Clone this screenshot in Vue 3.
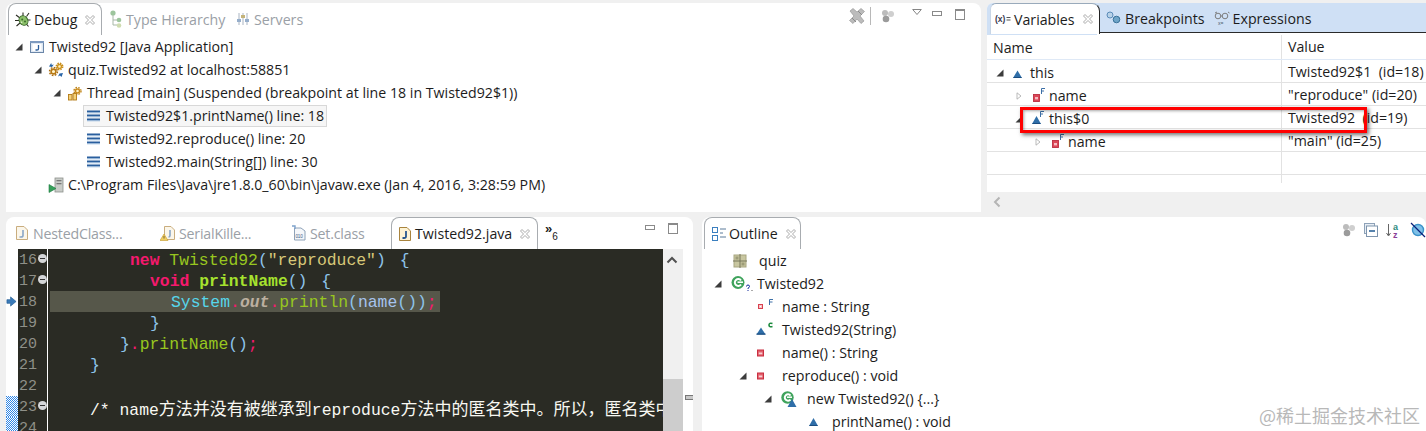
<script setup>
const debugRows = [
  { level: 0, arrow: 'open', icon: 'japp', text: 'Twisted92 [Java Application]' },
  { level: 1, arrow: 'open', icon: 'gears', text: 'quiz.Twisted92 at localhost:58851' },
  { level: 2, arrow: 'open', icon: 'thread', text: 'Thread [main] (Suspended (breakpoint at line 18 in Twisted92$1))' },
  { level: 3, arrow: '', icon: 'frame', text: 'Twisted92$1.printName() line: 18', selected: true },
  { level: 3, arrow: '', icon: 'frame', text: 'Twisted92.reproduce() line: 20' },
  { level: 3, arrow: '', icon: 'frame', text: 'Twisted92.main(String[]) line: 30' },
  { level: 1, arrow: '', icon: 'proc', text: 'C:\\Program Files\\Java\\jre1.8.0_60\\bin\\javaw.exe (Jan 4, 2016, 3:28:59 PM)' },
]
const varRows = [
  { level: 0, arrow: 'open', icon: 'tri', name: 'this', value: 'Twisted92$1  (id=18)' },
  { level: 1, arrow: 'closed', icon: 'redf', name: 'name', value: '"reproduce" (id=20)' },
  { level: 1, arrow: 'open', icon: 'trif', name: 'this$0', value: 'Twisted92  (id=19)' },
  { level: 2, arrow: 'closed', icon: 'redf', name: 'name', value: '"main" (id=25)' },
  { level: 0, arrow: '', icon: '', name: '', value: '' },
]
const outlineRows = [
  { level: 0, arrow: '', icon: 'pkg', text: 'quiz' },
  { level: 0, arrow: 'open', icon: 'cls', text: 'Twisted92' },
  { level: 1, arrow: '', icon: 'field', text: 'name : String' },
  { level: 1, arrow: '', icon: 'ctor', text: 'Twisted92(String)' },
  { level: 1, arrow: '', icon: 'priv', text: 'name() : String' },
  { level: 1, arrow: 'open', icon: 'priv', text: 'reproduce() : void' },
  { level: 2, arrow: 'open', icon: 'anon', text: 'new Twisted92() {...}' },
  { level: 3, arrow: '', icon: 'otri', text: 'printName() : void' },
]
const editorTabs = [
  { icon: 'jfile', text: 'NestedClass...', w: 146 },
  { icon: 'jwarn', text: 'SerialKille...', w: 131 },
  { icon: 'cfile', text: 'Set.class', w: 108 },
]
const gutter = [
  { n: 16, fold: true }, { n: 17, fold: true }, { n: 18, current: true }, { n: 19 }, { n: 20 },
  { n: 21 }, { n: 22 }, { n: 23, fold: true, changed: true }, { n: 24, changed: true },
]
</script>

<template>
  <div class="root">
    <svg class="defs" width="0" height="0" aria-hidden="true">
      <defs>
        <pattern id="dither" width="2" height="2" patternUnits="userSpaceOnUse"><rect width="2" height="2" fill="#fff"/><rect width="1" height="1" fill="#2f86e6"/><rect x="1" y="1" width="1" height="1" fill="#2f86e6"/></pattern>
        <symbol id="open" viewBox="0 0 8 8"><path d="M7.5 .5 V7.5 H.5 Z" fill="#3c3c3c"/></symbol>
        <symbol id="closed" viewBox="0 0 8 10"><path d="M1.5 1 L6.5 5 L1.5 9 Z" fill="#fff" stroke="#aaa"/></symbol>
        <symbol id="close" viewBox="0 0 10 10"><path d="M.5 2 L2 .5 L5 3.5 L8 .5 L9.5 2 L6.5 5 L9.5 8 L8 9.5 L5 6.5 L2 9.5 L.5 8 L3.5 5 Z" fill="#fff" stroke="#a0a0a0" stroke-width=".9"/></symbol>
        <symbol id="japp" viewBox="0 0 16 16"><rect x="1.5" y="2.5" width="13" height="11" fill="#dfe8f3" stroke="#6b86a8"/><rect x="1" y="2" width="14" height="2" fill="#7d9ac0"/><rect x="3.5" y="5" width="9" height="7" fill="#fff"/><path d="M9.5 6 V10 Q9.5 11 8 11 H6.5" fill="none" stroke="#2a5d9c" stroke-width="1.3"/></symbol>
        <symbol id="gears" viewBox="0 0 16 16"><circle cx="5.5" cy="9.5" r="2.4" fill="#fff3c8" stroke="#b97a15" stroke-width="1.6"/><circle cx="5.5" cy="9.5" r="4" fill="none" stroke="#a96c10" stroke-width="1.4" stroke-dasharray="1.7 1.4"/><circle cx="11.5" cy="4.5" r="2" fill="#fff3c8" stroke="#cf9420" stroke-width="1.4"/><circle cx="11.5" cy="4.5" r="3.3" fill="none" stroke="#c58a18" stroke-width="1.3" stroke-dasharray="1.5 1.1"/><path d="M1 4.5 L3.2 1 L3.8 3 L5.8 2.6 L4 5 Z" fill="#2a66a8"/><path d="M15 11 L13.5 15 L12 13.4 L10 14.5 L11.5 11.5 Z" fill="#2a66a8"/></symbol>
        <symbol id="thread" viewBox="0 0 16 16"><circle cx="10.5" cy="6" r="2" fill="#fff3c8" stroke="#c98a1c" stroke-width="1.4"/><circle cx="10.5" cy="6" r="3.5" fill="none" stroke="#c08416" stroke-width="1.4" stroke-dasharray="1.6 1.2"/><rect x="1.5" y="9.5" width="3.5" height="5.5" fill="#f4d27a" stroke="#b37a16" stroke-width=".9"/><rect x="6" y="8.5" width="3.5" height="6.5" fill="#f4d27a" stroke="#b37a16" stroke-width=".9"/></symbol>
        <symbol id="frame" viewBox="0 0 16 16"><g fill="#2a5f9e"><rect x="1" y="2.5" width="13" height="2"/><rect x="1" y="6.5" width="13" height="2"/><rect x="1" y="10.5" width="13" height="2"/></g><g fill="#9fc0e0"><rect x="1" y="4.5" width="13" height=".8"/><rect x="1" y="8.5" width="13" height=".8"/><rect x="1" y="12.5" width="13" height=".8"/></g></symbol>
        <symbol id="proc" viewBox="0 0 16 16"><rect x="7" y="1" width="8" height="14" fill="#c9ccc8" stroke="#8d918c" stroke-width=".8"/><rect x="8.5" y="3" width="5" height="1.3" fill="#777"/><rect x="8.5" y="6" width="5" height="1.3" fill="#777"/><path d="M1 7.5 L8 11.5 L1 15.5 Z" fill="#36a05a" stroke="#1e7a3f" stroke-width=".6"/></symbol>
        <symbol id="tri" viewBox="0 0 16 16"><path d="M4.5 5.5 L9 13 H0 Z" fill="#2f6ea8"/><rect x=".5" y="12" width="8" height="1" fill="#1b4d80"/></symbol>
        <symbol id="otri" viewBox="0 0 22 16"><path d="M7.5 4 L12 12 H3 Z" fill="#2f6ea8"/><rect x="3.5" y="11" width="8" height="1" fill="#1b4d80"/></symbol>
        <symbol id="redf" viewBox="0 0 16 16"><rect x="1.5" y="6.5" width="6" height="7" fill="#dc4757" stroke="#bb3042" stroke-width=".9"/><rect x="3" y="9" width="3" height="2.4" fill="#f6bcc2"/><path d="M9.5 6 V.5 H13 M9.5 3 H12" fill="none" stroke="#3c6fa6"/></symbol>
        <symbol id="trif" viewBox="0 0 16 16"><path d="M4.5 5 L9 13 H0 Z" fill="#2f6ea8"/><rect x=".5" y="12" width="8" height="1" fill="#1b4d80"/><path d="M8.5 6 V.5 H12 M8.5 3 H11" fill="none" stroke="#3c6fa6"/></symbol>
        <symbol id="pkg" viewBox="0 0 14 14"><rect x="1" y="1" width="12" height="12" fill="#c8c6a0" stroke="#a8a680"/><path d="M7 0 V14 M0 7 H14" stroke="#77775a"/><rect x="2.5" y="2.5" width="3" height="3" fill="#9d9c78"/><rect x="8.5" y="8.5" width="3" height="3" fill="#9d9c78"/></symbol>
        <symbol id="cls" viewBox="0 0 22 16"><circle cx="7" cy="6.5" r="6.5" fill="#3fa35c"/><path d="M10 4.5 A3.4 3.4 0 1 0 10 8.5" fill="none" stroke="#fff" stroke-width="2"/><path d="M6.5 6.2 H12" stroke="#fff" stroke-width="1.6"/><path d="M15.5 10.5 Q15.5 9 17 9 Q18.5 9 18.5 10.5 Q18.5 11.5 17 12.2 V13 M17 14 V15" fill="none" stroke="#102a9a" stroke-width="1"/><rect x="20.5" y="14" width="1" height="1" fill="#555"/></symbol>
        <symbol id="field" viewBox="0 0 22 16"><rect x="2.5" y="5.5" width="4" height="4" fill="#f3c4c8" stroke="#d9404f"/><rect x="4" y="7" width="1" height="1" fill="#fff"/><path d="M13.5 6 V.5 H17 M13.5 3 H16.5" fill="none" stroke="#3c6fa6"/></symbol>
        <symbol id="ctor" viewBox="0 0 22 16"><path d="M5 5.5 L9.5 12.5 H.5 Z" fill="#2f6ea8"/><rect x=".5" y="11.5" width="9" height="1.2" fill="#1b4d80"/><path d="M16.5 1.5 Q13 .5 13 3 Q13 5.5 16.5 4.5" fill="none" stroke="#1b8a3c" stroke-width="1.6"/></symbol>
        <symbol id="priv" viewBox="0 0 22 16"><rect x="1.5" y="5" width="6" height="6" fill="#e2606c" stroke="#c92f40"/><rect x="2.8" y="7.5" width="3.5" height="1.8" fill="#f8d0d4"/></symbol>
        <symbol id="anon" viewBox="0 0 22 16"><circle cx="6.5" cy="6.5" r="6.2" fill="#3fa35c"/><path d="M9.5 4.5 A3.2 3.2 0 1 0 9.5 8.5" fill="none" stroke="#fff" stroke-width="2"/><path d="M6 6.2 H11" stroke="#fff" stroke-width="1.5"/><path d="M11 8 L15.5 16 H6.5 Z" fill="#2f6ea8"/></symbol>
        <symbol id="jfile" viewBox="0 0 14 16"><path d="M1.5 1.5 H9 L12.5 5 V14.5 H1.5 Z" fill="#fbf6ea" stroke="#c9ad7e"/><path d="M8 5 V10.5 Q8 12 6 12 H4.5" fill="none" stroke="#8aa6c6" stroke-width="1.6"/></symbol>
        <symbol id="jactive" viewBox="0 0 14 16"><path d="M1.5 1.5 H9 L12.5 5 V14.5 H1.5 Z" fill="#fdf3d4" stroke="#a9843e"/><path d="M8 5 V10.5 Q8 12 6 12 H4.5" fill="none" stroke="#27578f" stroke-width="1.8"/></symbol>
        <symbol id="jwarn" viewBox="0 0 16 16"><path d="M4.5 1.5 H11 L14.5 5 V14.5 H4.5 Z" fill="#fbf6ea" stroke="#c9ad7e"/><path d="M10 5 V10.5 Q10 12 8.5 12" fill="none" stroke="#8aa6c6" stroke-width="1.6"/><path d="M4 9 L8 15.5 H0 Z" fill="#f0cf62" stroke="#c49b2e" stroke-width=".6"/><path d="M4 11 V13.5" stroke="#75603a"/></symbol>
        <symbol id="cfile" viewBox="0 0 16 16"><path d="M3.5 3 H10 L14 6 V15 H3.5 Z" fill="#f5f7fa" stroke="#8ea2b8"/><path d="M1 1 L4 1 L4 4" fill="none" stroke="#7ea2cc" stroke-width="1.4"/><text x="4.5" y="13" font-size="4.6" font-family="Liberation Sans, sans-serif" fill="#3d5d85">010</text></symbol>
        <symbol id="bug" viewBox="0 0 16 16"><path d="M1 3 L5 6 M0 8.5 H4 M1.5 14 L5 11 M8 .5 L8 4 M14 1 L11.5 4.5 M15.5 8 H12 M13.5 14.5 L11 11.5" stroke="#2c2c24" stroke-width="1.1"/><ellipse cx="8.5" cy="8.5" rx="4.2" ry="5" fill="#8cc06a" stroke="#3c6b2c" transform="rotate(-35 8.5 8.5)"/><circle cx="7.2" cy="7.4" r="1" fill="#3c6b2c"/><circle cx="10" cy="9.6" r="1" fill="#3c6b2c"/><circle cx="6.5" cy="10.4" r=".8" fill="#dff0c8"/></symbol>
        <symbol id="hier" viewBox="0 0 14 18"><circle cx="4" cy="3" r="2.6" fill="#9dc59d"/><path d="M4 5 V15 H8 M4 10 H8" fill="none" stroke="#a7b8a7"/><circle cx="10" cy="10" r="2.3" fill="#9dc59d"/><circle cx="10" cy="15.5" r="2.3" fill="#cfdcb0"/></symbol>
        <symbol id="servers" viewBox="0 0 14 14"><path d="M3 1 V13 M7 1 V13 M11 1 V13" stroke="#a9b4c2"/><rect x="1" y="7" width="4" height="3" fill="#96aecb"/><rect x="5" y="3" width="4" height="3" fill="#c5b47a"/><rect x="9" y="7" width="4" height="3" fill="#96aecb"/></symbol>
        <symbol id="vars" viewBox="0 0 16 12"><text x="0" y="9" font-size="8.5" font-weight="700" font-family="Liberation Sans, sans-serif" fill="#3a3a50">(x)</text><path d="M11.5 4.5 H15.5 M11.5 7 H15.5" stroke="#555"/></symbol>
        <symbol id="bp" viewBox="0 0 15 14"><circle cx="4" cy="4" r="3" fill="#b8d2e8" stroke="#5a8bb8"/><circle cx="10.5" cy="8.5" r="3.3" fill="#6fa5c8" stroke="#3a7299"/></symbol>
        <symbol id="expr" viewBox="0 0 16 14"><circle cx="4" cy="5" r="2.8" fill="none" stroke="#7d7d7d"/><circle cx="11" cy="5" r="2.8" fill="none" stroke="#7d7d7d"/><path d="M6.8 5 H8.2 M1 2 L3 1 M14 1 L15.5 2" stroke="#7d7d7d"/><text x="4" y="13.5" font-size="5" font-family="Liberation Sans, sans-serif" fill="#4a5a6a">x=</text></symbol>
        <symbol id="rmv" viewBox="0 0 16 16"><path d="M1 3 L4 .5 L8 4 L12 .5 L15.5 3.5 L11 8 L15 13 L12 15.5 L8 11 L4 15.5 L.5 12.5 L5 8 Z" fill="#bcbcbc" stroke="#9a9a9a" stroke-width=".7"/><path d="M3 10 L7 14 M9 3 L13 7" stroke="#8a8a8a"/></symbol>
        <symbol id="coins" viewBox="0 0 14 14"><circle cx="4" cy="4" r="3" fill="#bcbcbc"/><circle cx="10" cy="5" r="3" fill="#cfcfcf"/><circle cx="5" cy="10" r="3.3" fill="#9b9b9b"/></symbol>
        <symbol id="collapse" viewBox="0 0 14 14"><rect x=".5" y=".5" width="10" height="10" fill="#e8eef5" stroke="#8ea2b8"/><rect x="2.5" y="3" width="11" height="10.5" fill="#fff" stroke="#7f95ad"/><path d="M5 8 H11" stroke="#1f5a92" stroke-width="1.5"/></symbol>
        <symbol id="sortaz" viewBox="0 0 16 16"><path d="M2.5 2 V13 M.5 11 L2.5 14 L4.5 11" fill="none" stroke="#666"/><text x="7" y="8" font-size="9" font-weight="700" font-family="Liberation Sans, sans-serif" fill="#2d8a80">a</text><text x="7" y="16" font-size="9" font-weight="700" font-family="Liberation Sans, sans-serif" fill="#8b3f98">z</text></symbol>
        <symbol id="hide" viewBox="0 0 16 16"><circle cx="8" cy="8" r="5.5" fill="#7ec0e8" stroke="#3b92c9" stroke-width="1.4"/><path d="M1 1 L15 15" stroke="#0a1f78" stroke-width="1.3"/></symbol>
        <symbol id="arrow" viewBox="0 0 12 12"><path d="M1 4 H5 V1 L11 6 L5 11 V8 H1 Z" fill="#3a7ab8" stroke="#1f5a92" stroke-width=".7"/></symbol>
      </defs>
    </svg>

    <div class="top">
      <section class="pane debug">
        <header class="tabs">
          <div class="tab active debugtab">
            <svg class="ic16"><use href="#bug"/></svg>
            <span>Debug</span>
            <svg class="x"><use href="#close"/></svg>
          </div>
          <div class="tab ghost hiertab"><svg class="hier"><use href="#hier"/></svg><span>Type Hierarchy</span></div>
          <div class="tab ghost srvtab"><svg class="srv"><use href="#servers"/></svg><span>Servers</span></div>
          <div class="tools">
            <svg class="ic16"><use href="#rmv"/></svg>
            <i class="sep"></i>
            <svg class="coin"><use href="#coins"/></svg>
            <svg class="menu" viewBox="0 0 10 6"><path d="M.7 .5 H9.3 L5 5.5 Z" fill="#fff" stroke="#777" stroke-width=".9"/></svg>
            <i class="min"></i>
            <i class="max"></i>
          </div>
        </header>
        <div class="tree">
          <div v-for="r in debugRows" :key="r.text" class="row" :style="{ paddingLeft: 9 + r.level * 19 + 'px' }">
            <span class="arrow"><svg v-if="r.arrow" class="tri"><use :href="'#' + r.arrow"/></svg></span>
            <span class="cell" :class="{ sel: r.selected }">
              <svg class="ic16"><use :href="'#' + r.icon"/></svg>
              <span class="label">{{ r.text }}</span>
            </span>
          </div>
        </div>
      </section>

      <section class="pane vars">
        <header class="bluetabs">
          <div class="btab active">
            <svg class="varsic"><use href="#vars"/></svg>
            <span>Variables</span>
            <svg class="x"><use href="#close"/></svg>
          </div>
          <div class="btab bptab"><svg class="bpic"><use href="#bp"/></svg><span>Breakpoints</span></div>
          <div class="btab extab"><svg class="exic"><use href="#expr"/></svg><span>Expressions</span></div>
        </header>
        <div class="table">
          <div class="vrow head"><div class="cname">Name</div><div class="cval">Value</div></div>
          <div v-for="(r, i) in varRows" :key="i" class="vrow">
            <div class="cname" :style="{ paddingLeft: 9 + r.level * 19 + 'px' }">
              <span class="varrow"><svg v-if="r.arrow" class="tri"><use :href="'#' + r.arrow"/></svg></span>
              <svg v-if="r.icon" class="vic"><use :href="'#' + r.icon"/></svg>
              <span>{{ r.name }}</span>
            </div>
            <div class="cval">{{ r.value }}</div>
          </div>
          <div class="vrow stub"><div class="cname"></div><div class="cval"></div></div>
        </div>
        <div class="hscroll"><svg class="chev" viewBox="0 0 8 12"><path d="M6.5 1.5 L2 6 L6.5 10.5" fill="none" stroke="#b5b5b5" stroke-width="2"/></svg></div>
        <div class="redbox"></div>
      </section>
    </div>

    <div class="bottom">
      <section class="pane editor">
        <header class="tabs etabs">
          <div v-for="t in editorTabs" :key="t.text" class="etab" :style="{ width: t.w + 'px' }">
            <svg class="ic16"><use :href="'#' + t.icon"/></svg>
            <span>{{ t.text }}</span>
          </div>
          <div class="tab active jtab">
            <svg class="jic"><use href="#jactive"/></svg>
            <span>Twisted92.java</span>
            <svg class="x"><use href="#close"/></svg>
          </div>
          <div class="more"><b>»</b><sub>6</sub></div>
          <div class="tools etools"><i class="min"></i><i class="max"></i></div>
        </header>
        <div class="editbody">
          <div class="stripe">
            <div v-for="g in gutter" :key="g.n" class="sline">
              <svg v-if="g.current" class="cur"><use href="#arrow"/></svg>
              <svg v-if="g.changed" class="dith"><rect width="12" height="21" fill="url(#dither)"/></svg>
            </div>
          </div>
          <div class="code">
            <div class="nums">
              <div v-for="g in gutter" :key="g.n" class="num"><span>{{ g.n }}</span><i v-if="g.fold" class="fold"></i></div>
            </div>
            <div class="lines">
              <div class="ln i8"><span class="kw">new</span> <span class="cl">Twisted92</span><span class="br">(</span><span class="st">"reproduce"</span><span class="br">)</span> <span class="br gap">{</span></div>
              <div class="ln i10"><span class="kw">void</span> <span class="fn">printName</span><span class="br">()</span> <span class="br gap">{</span></div>
              <div class="ln hl"><span class="pad12"></span><span class="sys">System</span><span class="pk">.</span><span class="out">out</span><span class="pk">.</span><span class="cl">println</span><span class="br">(</span><span class="nm">name</span><span class="br">())</span><span class="pk">;</span></div>
              <div class="ln i10"><span class="br">}</span></div>
              <div class="ln i7"><span class="br">}</span><span class="pk">.</span><span class="cl">printName</span><span class="br">()</span><span class="pk">;</span></div>
              <div class="ln i4"><span class="br">}</span></div>
              <div class="ln"></div>
              <div class="ln i4 cm">/* name<span class="cjk">方法并没有被继承到</span>reproduce<span class="cjk">方法中的匿名类中。所以，匿名类中</span></div>
              <div class="ln"></div>
            </div>
          </div>
          <div class="vscroll">
            <svg class="up" viewBox="0 0 12 8"><path d="M1.5 6.5 L6 2 L10.5 6.5" fill="none" stroke="#505050" stroke-width="2"/></svg>
            <div class="thumb"></div>
          </div>
          <div class="overview"><i class="mark"></i></div>
        </div>
      </section>

      <section class="pane outline">
        <header class="tabs">
          <div class="tab active otab">
            <svg class="oic" viewBox="0 0 14 14"><rect x=".5" y=".5" width="5" height="5" fill="#fff" stroke="#3b7fbf"/><rect x=".5" y="8.5" width="5" height="5" fill="#fff" stroke="#3b7fbf"/><path d="M8 2 H14 M8 6 H11 M8 10 H14" stroke="#5a7a9a"/></svg>
            <span>Outline</span>
            <svg class="x"><use href="#close"/></svg>
          </div>
          <div class="tools otools">
            <svg class="coin"><use href="#coins"/></svg>
            <svg class="coin"><use href="#collapse"/></svg>
            <svg class="ic16"><use href="#sortaz"/></svg>
            <svg class="ic16"><use href="#hide"/></svg>
          </div>
        </header>
        <div class="tree">
          <div v-for="r in outlineRows" :key="r.text" class="row" :style="{ paddingLeft: 12 + r.level * 25 + 'px' }">
            <span class="oarrow"><svg v-if="r.arrow" class="tri"><use :href="'#' + r.arrow"/></svg></span>
            <svg class="oicon" :class="r.icon"><use :href="'#' + r.icon"/></svg>
            <span class="olabel">{{ r.text }}</span>
          </div>
        </div>
        <div class="wm">@稀土掘金技术社区</div>
      </section>
    </div>
  </div>
</template>

<style>
html, body { margin: 0; background: #f0f0f0; }
</style>

<style scoped>
.root { width: 1426px; height: 431px; overflow: hidden; background: #f0f0f0; padding-top: 3px; box-sizing: border-box; font: 14.2px/23px "Open Sans", "Noto Sans CJK SC", sans-serif; color: #1c1c1c; position: relative; }
.defs { position: absolute; }
.top { display: flex; height: 209px; padding-left: 6px; gap: 6px; }
.bottom { display: flex; height: 214px; margin-top: 5px; padding-left: 6px; gap: 9px; }
.pane { background: #fff; position: relative; border-radius: 8px 8px 0 0; overflow: hidden; box-sizing: border-box; }
.debug { width: 975px; }
.vars { width: 439px; flex: none; border-radius: 6px 0 0 0; }
.editor { width: 687px; flex: none; }
.outline { flex: 1; }
svg { display: block; flex: none; }
.ic16 { width: 16px; height: 16px; }
.tabs { display: flex; height: 32px; align-items: flex-start; position: relative; }
.tab { display: flex; align-items: center; height: 32px; box-sizing: border-box; flex: none; }
.tab.active { border: 1px solid #a8acb0; border-bottom: 0; border-radius: 8px 8px 0 0; background: #fff; }
.tab.ghost { color: #9aa0a6; }
.x { width: 10px; height: 10px; }
.debugtab { width: 94px; margin-left: 2px; padding-left: 6px; }
.debugtab span { margin-left: 3px; }
.debugtab .x { margin-left: 8px; }
.hiertab { margin-left: 7px; width: 127px; }
.hier { width: 14px; height: 18px; margin-right: 3px; }
.srv { width: 14px; height: 14px; margin-right: 4px; }
.tools { margin-left: auto; display: flex; align-items: center; height: 32px; }
.debug .tools { padding-right: 16px; margin-top: -3px; }
.sep { width: 1px; height: 18px; background: #b8b8b8; margin: 0 10px 0 5px; }
.coin { width: 14px; height: 14px; }
.menu { width: 10px; height: 6px; margin: 9px 10px 0 17px; align-self: flex-start; }
.min { width: 8px; height: 3px; border: 1px solid #8a8a8a; background: #fff; margin-top: -6px; }
.max { width: 8px; height: 8px; border: 1px solid #8a8a8a; border-top-width: 2px; margin-left: 13px; margin-top: -3px; }
.row { display: flex; align-items: center; height: 23px; white-space: nowrap; }
.arrow { width: 14px; flex: none; }
.tri { width: 8px; height: 8px; }
.cell { display: flex; align-items: center; gap: 4px; height: 22px; padding: 0 3px; margin-left: -3px; box-sizing: border-box; }
.cell.sel { background: #f6f6f6; outline: 1px solid #d8d8d8; outline-offset: -1px; }
.bluetabs { display: flex; height: 29px; background: #cfe0f5; border-bottom: 1px solid #2a2a2a; align-items: center; position: relative; }
.btab { display: flex; align-items: center; height: 29px; padding-top: 1px; box-sizing: border-box; flex: none; color: #1c1c1c; }
.btab.active { background: #fff; width: 110px; margin-left: 3px; margin-bottom: -2px; height: 31px; padding: 0 0 0 4px; border: 1px solid #c8d6e6; border-right-color: #222; border-top-color: #9ab; border-bottom: 0; border-radius: 6px 8px 0 0; box-shadow: -3px 1px 0 #cfe0f5; }
.varsic { width: 16px; height: 12px; margin-right: 3px; }
.btab.active .x { margin-left: 8px; }
.bptab { margin-left: 6px; }
.bpic { width: 15px; height: 14px; margin-right: 4px; }
.extab { margin-left: 9px; }
.exic { width: 16px; height: 14px; margin-right: 3px; }
.table { margin-top: 2px; height: 148px; overflow: hidden; }
.vrow { display: grid; grid-template-columns: 295px 1fr; height: 23px; border-bottom: 1px solid #e2e2e2; box-sizing: border-box; white-space: nowrap; }
.vrow.head { height: 25px; border-bottom-color: #dfe9f6; }
.cname { display: flex; align-items: center; padding-top: 1px; border-right: 1px solid #e2e2e2; box-sizing: border-box; }
.head .cname { padding-left: 6px; }
.cval { padding: 1px 0 0 6px; line-height: 22px; overflow: hidden; white-space: pre; }
.varrow { width: 17px; flex: none; }
.vic { width: 16px; height: 16px; margin-right: 1px; }
.hscroll { height: 20px; background: #f0f0f0; margin-top: 9px; display: flex; align-items: center; padding-left: 6px; }
.chev { width: 8px; height: 12px; }
.redbox { position: absolute; left: 33px; top: 104px; width: 347px; height: 26px; box-sizing: border-box; border: 3px solid #f00; box-shadow: 2px 2px 4px rgba(0,0,0,.55), inset 1px 1px 3px rgba(0,0,0,.35); }
.etab { display: flex; align-items: center; flex: none; height: 32px; color: #9aa0a6; padding-left: 8px; box-sizing: border-box; letter-spacing: -.2px; }
.etab .ic16 { margin-right: 3px; }
.jtab { width: 147px; padding-left: 6px; color: #1c1c1c; }
.jic { width: 14px; height: 16px; margin-right: 3px; }
.jtab .x { margin-left: 8px; }
.more { margin-left: 7px; font: 12px/12px "Liberation Sans", sans-serif; display: flex; margin-top: 6px; }
.more b { font-size: 13px; }
.more sub { font-size: 10px; line-height: 12px; margin-top: 8px; vertical-align: baseline; }
.etools { padding-right: 15px; margin-top: -3px; }
.otools { gap: 8px; margin-top: -3px; }
.editbody { display: flex; height: 182px; background: #fff; }
.stripe { width: 12px; flex: none; }
.sline { height: 21px; }
.dith { width: 12px; height: 21px; }
.cur { width: 11px; height: 11px; padding-top: 5px; }
.code { display: flex; width: 645px; flex: none; background: #2a2b24; overflow: hidden; }
.nums { width: 29px; flex: none; border-right: 1px solid #fff; font: 15px/19px "Liberation Mono", monospace; color: #8f9088; }
.num { height: 21px; box-sizing: border-box; padding: 2px 0 0 1px; display: flex; align-items: center; justify-content: space-between; }
.fold { width: 9px; height: 9px; border-radius: 50%; background: linear-gradient(#333, #333) center / 5px 1px no-repeat, #d4d6d8; margin-top: -5px; }
.lines { flex: 1; min-width: 0; padding-left: 2px; font: 16.4px/19px "Liberation Mono", "Noto Sans CJK SC", monospace; color: #f8f8f2; white-space: pre; }
.ln { height: 21px; box-sizing: border-box; padding: 2px 0 0 1px; }
.i4 { padding-left: 40px; } .i7 { padding-left: 70px; } .i8 { padding-left: 80px; } .i10 { padding-left: 100px; }
.hl { background: #56574a; width: 390px; }
.pad12 { display: inline-block; width: 120px; }
.kw { color: #f5196e; font-weight: 700; }
.cl { color: #98c71f; }
.fn { color: #a6e22e; font-weight: 700; }
.br { color: #8ec4ea; }
.gap { margin-left: 4px; }
.st { color: #d8c878; }
.sys { color: #56d6ea; }
.pk { color: #f5196e; }
.out { color: #bcb0a0; font-weight: 700; font-style: italic; }
.nm { color: #a6c4ee; }
.cjk { font-size: 17px; font-family: "Noto Sans CJK SC", sans-serif; color: #f8f8f2; }
.cm { color: #f8f8f2; }
.vscroll { width: 20px; flex: none; background: #f0f0f0; }
.up { width: 12px; height: 8px; margin: 7px 0 0 3px; }
.thumb { height: 52px; margin-top: 115px; background: #cdcdcd; }
.overview { flex: 1; padding-top: 146px; }
.mark { display: block; width: 7px; height: 3px; background: #c8c8c8; border: 1px solid #777; margin-left: 2px; }
.otab { width: 97px; margin-left: 2px; padding-left: 7px; }
.oic { width: 14px; height: 14px; margin-right: 3px; }
.otab .x { margin-left: 8px; }
.oarrow { width: 17px; flex: none; }
.oicon { width: 22px; height: 16px; margin-right: 4px; }
.oicon.pkg { height: 14px; width: 14px; margin: 0 12px 0 2px; }
.wm { position: absolute; right: 6px; bottom: 4px; font: 18px/24px "Noto Sans CJK SC", sans-serif; color: #b8b8b8; }
</style>
